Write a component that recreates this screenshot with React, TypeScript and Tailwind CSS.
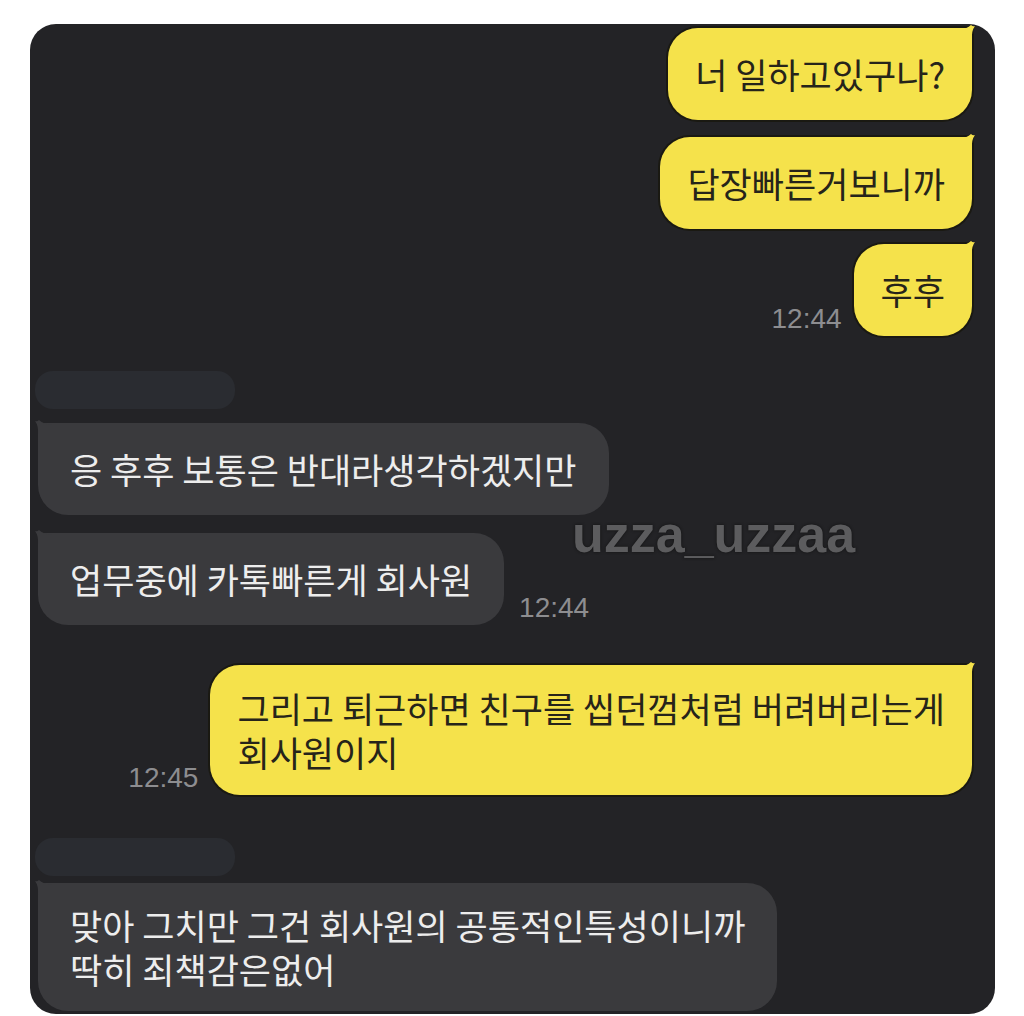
import type { ReactNode } from 'react';

const kr = { fontFamily: '"Noto Sans CJK KR", "Noto Sans", sans-serif' };
const num = { fontFamily: '"Liberation Sans", Arial, sans-serif' };

type BubbleProps = { children: ReactNode; time?: string; className?: string; py?: string };

function Time({ children }: { children: ReactNode }) {
    return (
        <span className="text-[28px] leading-none text-[#8d8d90] mb-[3px]" style={num}>
            {children}
        </span>
    );
}

function Mine({ children, time, className = '', py = 'py-[24px]' }: BubbleProps) {
    return (
        <div className={`flex items-end justify-end gap-[12px] ${className}`}>
            {time && <Time>{time}</Time>}
            <div className="relative">
                <div
                    className={`rounded-[30px] rounded-tr-[6px] bg-[#f5e24b] px-[27px] ${py} text-[35px] leading-[44px] text-[#26241a] whitespace-nowrap shadow-[0_0_0_2px_#1a1912]`}
                    style={kr}
                >
                    {children}
                </div>
                <svg className="absolute -right-[6px] -top-[3px]" width="20" height="16" viewBox="0 0 20 16">
                    <path d="M0 4 Q8 5 13 0 Q15 2 17 1 Q13 6 14 16 L0 16 Z" fill="#f5e24b" />
                </svg>
            </div>
        </div>
    );
}

function Theirs({ children, time, className = '', py = 'py-[24px]' }: BubbleProps) {
    return (
        <div className={`flex items-end justify-start gap-[15px] ${className}`}>
            <div className="relative ml-[3px]">
                <div
                    className={`rounded-[30px] rounded-tl-[6px] bg-[#3a3a3d] px-[32px] ${py} text-[35px] leading-[44px] text-[#ededed] whitespace-nowrap`}
                    style={kr}
                >
                    {children}
                </div>
                <svg className="absolute -left-[6px] -top-[3px]" width="20" height="16" viewBox="0 0 20 16">
                    <path d="M20 4 Q12 5 7 0 Q5 2 3 1 Q7 6 6 16 L20 16 Z" fill="#3a3a3d" />
                </svg>
            </div>
            {time && <Time>{time}</Time>}
        </div>
    );
}

function NameBar({ className = '' }: { className?: string }) {
    return <div className={`h-[38px] w-[200px] rounded-[18px] bg-[#2a2c31] ${className}`} />;
}

export default function App() {
    return (
        <div className="min-h-[1016px] w-[1024px] bg-white pt-[24px] pl-[30px]">
            <div className="relative h-[990px] w-[965px] overflow-hidden rounded-[26px] bg-[#232326] pt-[4px] pr-[23px] pl-[5px]">
                <Mine>너 일하고있구나?</Mine>
                <Mine className="mt-[17px]">답장빠른거보니까</Mine>
                <Mine className="mt-[15px]" time="12:44">
                    후후
                </Mine>

                <NameBar className="mt-[35px]" />
                <Theirs className="mt-[14px]">응 후후 보통은 반대라생각하겠지만</Theirs>
                <Theirs className="mt-[18px]" time="12:44">
                    업무중에 카톡빠른게 회사원
                </Theirs>

                <Mine className="mt-[40px]" time="12:45" py="py-[21px]">
                    그리고 퇴근하면 친구를 씹던껌처럼 버려버리는게
                    <br />
                    회사원이지
                </Mine>

                <NameBar className="mt-[43px]" />
                <Theirs className="mt-[7px]" py="py-[20px]">
                    맞아 그치만 그건 회사원의 공통적인특성이니까
                    <br />
                    딱히 죄책감은없어
                </Theirs>

                <div
                    className="absolute left-[542px] top-[484px] text-[52px] font-bold leading-none text-[#5c5c5e] [text-shadow:0_0_3px_#111]"
                    style={num}
                >
                    uzza_uzzaa
                </div>
            </div>
        </div>
    );
}
